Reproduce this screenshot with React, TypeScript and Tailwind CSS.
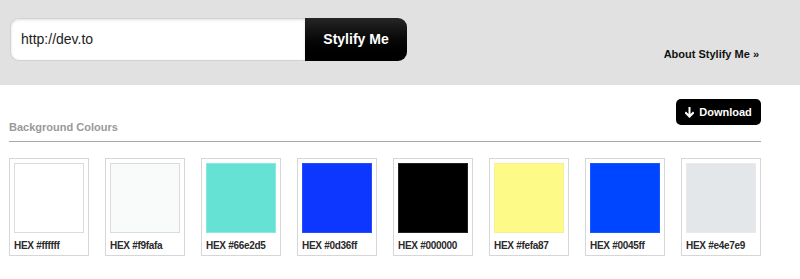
import React from "react";

const swatches = [
  { hex: "#ffffff", border: "border-[#dcdcdc]" },
  { hex: "#f9fafa", border: "border-[#dcdcdc]" },
  { hex: "#66e2d5", border: "border-[#8ae8de]" },
  { hex: "#0d36ff", border: "border-[#2a4cff]" },
  { hex: "#000000", border: "border-[#222222]" },
  { hex: "#fefa87", border: "border-[#f4f09a]" },
  { hex: "#0045ff", border: "border-[#1d55ff]" },
  { hex: "#e4e7e9", border: "border-[#e8eaec]" },
];

function ArrowDown() {
  return (
    <svg width="9" height="11" viewBox="0 0 9 11" className="block">
      <path d="M4.5 0.5 V9.5 M1 6 L4.5 9.5 L8 6" stroke="white" strokeWidth="2" fill="none" strokeLinecap="square" />
    </svg>
  );
}

export default function App() {
  return (
    <div className="w-[800px] h-[279px] bg-white overflow-hidden" style={{ fontFamily: '"Liberation Sans", Arial, sans-serif' }}>
      <div className="h-[85px] bg-[#e1e1e1] flex items-start justify-between">
        <div className="flex mt-[18px] ml-[10px]">
          <div className="w-[295px] h-[43px] bg-white rounded-l-[9px] border border-r-0 border-[#d2d2d2] shadow-[inset_0_1px_3px_rgba(0,0,0,0.12)] flex items-center pl-[10px] text-[14px] text-[#222]">
            http://dev.to
          </div>
          <div className="w-[102px] h-[43px] rounded-r-[9px] bg-gradient-to-b from-[#262626] to-[#000000] flex items-center justify-center text-white font-bold text-[14px]">
            Stylify Me
          </div>
        </div>
        <div className="mt-[46px] mr-[41px] text-[11px] font-bold text-[#111]">About Stylify Me »</div>
      </div>

      <div className="w-[752px] ml-[9px]">
        <div className="mt-[14px] h-[43px] flex justify-between border-b border-[#a8a8a8]">
          <div className="self-end mb-[6px] text-[11px] font-bold text-[#999]">Background Colours</div>
          <div className="self-start w-[85px] h-[26px] bg-black rounded-[5px] flex items-center justify-center gap-[5px] text-white font-bold text-[11px]">
            <ArrowDown />
            <span>Download</span>
          </div>
        </div>

        <div className="mt-[16px] flex gap-4">
          {swatches.map((s) => (
            <div key={s.hex} className="w-[80px] h-[98px] border border-[#d6d6d6] px-[4px] pt-[4px] flex flex-col">
              <div className={`w-[70px] h-[70px] border ${s.border}`} style={{ backgroundColor: s.hex }} />
              <div className="mt-[7px] text-[10px] font-bold tracking-[-0.3px] text-[#2a2a2a] leading-[12px]">HEX {s.hex}</div>
            </div>
          ))}
        </div>
      </div>
    </div>
  );
}
